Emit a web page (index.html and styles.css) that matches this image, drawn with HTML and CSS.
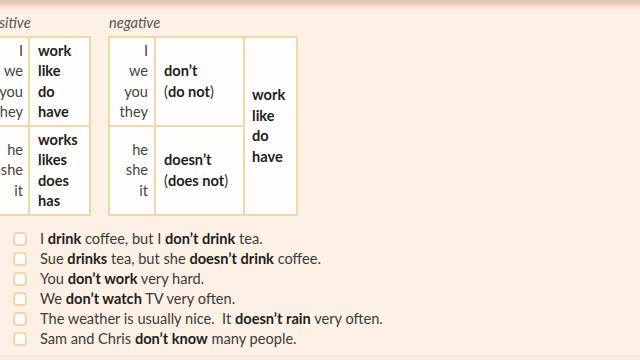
FILE: index.html
```html
<!DOCTYPE html>
<html>
<head>
<meta charset="utf-8">
<link rel="stylesheet" href="styles.css">
</head>
<body>
<div class="topband"></div>
<div class="tables">
  <div class="group pos">
    <div class="label">positive</div>
    <div class="grid grid-pos">
      <div class="cell pron"><div>I<br>we<br>you<br>they</div></div>
      <div class="cell verb"><div>work<br>like<br>do<br>have</div></div>
      <div class="cell pron"><div>he<br>she<br>it</div></div>
      <div class="cell verb"><div>works<br>likes<br>does<br>has</div></div>
    </div>
  </div>
  <div class="group neg">
    <div class="label">negative</div>
    <div class="grid grid-neg">
      <div class="cell pron"><div>I<br>we<br>you<br>they</div></div>
      <div class="cell aux"><div><b>don’t</b><br>(<b>do not</b>)</div></div>
      <div class="cell verb3"><div>work<br>like<br>do<br>have</div></div>
      <div class="cell pron"><div>he<br>she<br>it</div></div>
      <div class="cell aux"><div><b>doesn’t</b><br>(<b>does not</b>)</div></div>
    </div>
  </div>
</div>
<ul class="list">
  <li><span class="box"></span><span>I <b>drink</b> coffee, but I <b>don’t drink</b> tea.</span></li>
  <li><span class="box"></span><span>Sue <b>drinks</b> tea, but she <b>doesn’t drink</b> coffee.</span></li>
  <li><span class="box"></span><span>You <b>don’t work</b> very hard.</span></li>
  <li><span class="box"></span><span>We <b>don’t watch</b> TV very often.</span></li>
  <li><span class="box"></span><span>The weather is usually nice.&nbsp; It <b>doesn’t rain</b> very often.</span></li>
  <li><span class="box"></span><span>Sam and Chris <b>don’t know</b> many people.</span></li>
</ul>
<div class="bottomband"></div>
</body>
</html>
```
FILE: styles.css
```css
html, body {
  margin: 0;
  padding: 0;
}
body {
  width: 640px;
  height: 360px;
  overflow: hidden;
  background: #fdf1e5;
  font-family: Lato, "Open Sans", sans-serif;
  font-size: 14.6px;
  color: #3a3a3a;
  position: relative;
}
.topband {
  height: 10px;
  background: linear-gradient(to bottom, #d9c6b8 0, #d9c6b8 2px, #f3c6b6 3px, #f8d9cb 6px, #fdf1e5 10px);
}
.tables {
  display: flex;
  margin-left: -20px;
  margin-top: 5px;
}
.group {
  display: flex;
  flex-direction: column;
}
.neg {
  margin-left: 17px;
}
.label {
  font-style: italic;
  color: #555;
  line-height: 16px;
  height: 16px;
  padding-left: 4px;
  margin-bottom: 5px;
}
.neg .label {
  padding-left: 1px;
}
.grid {
  display: grid;
  gap: 2px;
  padding: 2px;
  background: #f1d8a9;
  grid-template-rows: 87px 87px;
}
.grid-pos {
  grid-template-columns: 46px 59px;
}
.grid-neg {
  grid-template-columns: 44px 87px 51px;
}
.cell {
  background: #fffefc;
  display: flex;
  flex-direction: column;
  justify-content: center;
  line-height: 20.5px;
}
.pron {
  text-align: right;
  padding-right: 5px;
  color: #444;
}
.grid-neg .pron {
  padding-right: 6px;
}
.verb {
  font-weight: bold;
  color: #1e1e1e;
  padding-left: 8px;
}
.aux {
  padding-left: 8px;
  color: #333;
}
.aux b {
  color: #1e1e1e;
}
.verb3 {
  grid-row: 1 / 3;
  grid-column: 3;
  font-weight: bold;
  color: #1e1e1e;
  padding-left: 7px;
}
.list {
  list-style: none;
  margin: 13px 0 0 0;
  padding: 0 0 0 13px;
}
.list li {
  display: flex;
  align-items: center;
  height: 20px;
  line-height: 20px;
  color: #3a3a3a;
}
.list b {
  color: #1e1e1e;
}
.box {
  width: 10px;
  height: 10px;
  border: 2px solid #f0d6a8;
  border-radius: 4px;
  background: #fffdf8;
  margin-right: 13px;
  flex: none;
}
.bottomband {
  position: absolute;
  left: 0;
  right: 0;
  bottom: 0;
  height: 5px;
  background: linear-gradient(to bottom, #f7e9dc, #f9ede2);
}
```
